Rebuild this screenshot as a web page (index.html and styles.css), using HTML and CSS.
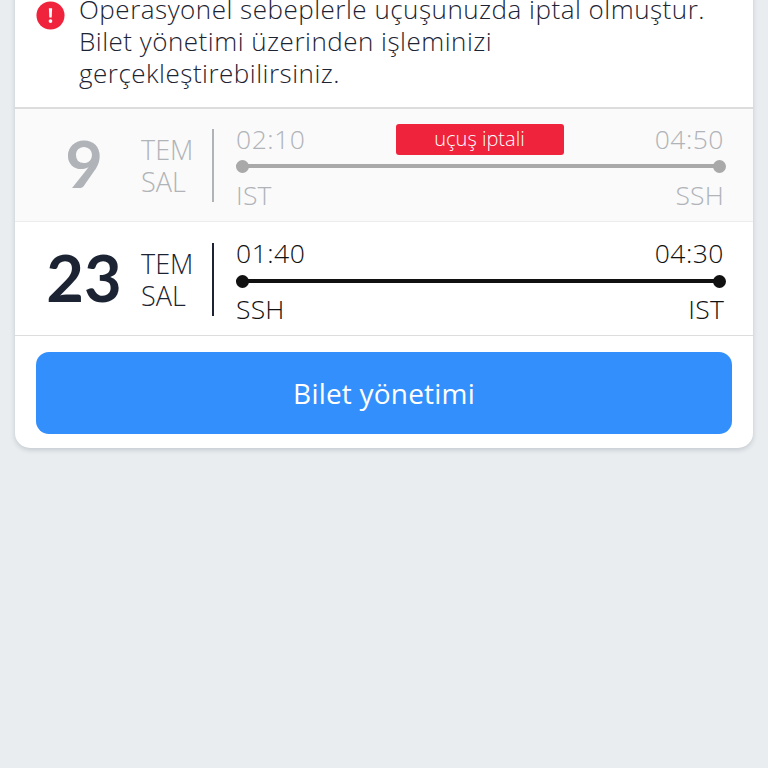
FILE: index.html
```html
<!DOCTYPE html>
<html lang="tr">
<head>
<meta charset="utf-8">
<title>Bilet yönetimi</title>
<link rel="stylesheet" href="styles.css">
</head>
<body>
<main class="card">
  <section class="notice">
    <svg class="notice-icon" viewBox="0 0 30 30" aria-hidden="true">
      <circle cx="15" cy="15" r="14.5" fill="#ef233c"/>
      <path d="M13.3 7.6h3.4l-.5 9.4h-2.4z" fill="#fff"/>
      <circle cx="15" cy="20.8" r="1.9" fill="#fff"/>
    </svg>
    <p class="notice-text">Operasyonel sebeplerle uçuşunuzda iptal olmuştur. Bilet yönetimi üzerinden işleminizi gerçekleştirebilirsiniz.</p>
  </section>
  <section class="flight flight-cancelled">
    <div class="date">
      <span class="day">9</span>
      <span class="month"><span>TEM</span><span>SAL</span></span>
    </div>
    <div class="route">
      <div class="route-row">
        <span>02:10</span>
        <span class="badge">uçuş iptali</span>
        <span>04:50</span>
      </div>
      <div class="line"></div>
      <div class="route-row route-codes"><span>IST</span><span>SSH</span></div>
    </div>
  </section>
  <section class="flight flight-active">
    <div class="date">
      <span class="day">23</span>
      <span class="month"><span>TEM</span><span>SAL</span></span>
    </div>
    <div class="route">
      <div class="route-row"><span>01:40</span><span>04:30</span></div>
      <div class="line"></div>
      <div class="route-row route-codes"><span>SSH</span><span>IST</span></div>
    </div>
  </section>
  <div class="actions"><button class="primary" type="button">Bilet yönetimi</button></div>
</main>
</body>
</html>
```
FILE: styles.css
```css
html, body {
  margin: 0;
  height: 100%;
  overflow: hidden;
}
body {
  background: #e9edf0;
  font-family: "Open Sans", "Lato", sans-serif;
  color: #1c2433;
}
.card {
  margin: -20px 15px 0;
  background: #fff;
  border-radius: 0 0 15px 15px;
  box-shadow: 0 2px 5px rgba(30, 40, 60, 0.18);
}
.notice {
  display: flex;
  gap: 14px;
  padding: 13px 21px 0;
  height: 129px;
  box-sizing: border-box;
  border-bottom: 2px solid #dcdcdc;
}
.notice-icon {
  width: 29px;
  height: 29px;
  margin-top: 8px;
  flex: none;
}
.notice-text {
  margin: 0;
  width: 640px;
  font-size: 26px;
  letter-spacing: 0.5px;
  line-height: 32px;
  font-weight: 300;
  color: #1c2433;
}
.flight {
  display: flex;
  height: 113px;
  box-sizing: border-box;
  padding: 20px 29px 0 0;
  border-bottom: 1.5px solid #dddddd;
}
.flight-active {
  height: 114px;
  padding-top: 21px;
}
.flight-cancelled {
  background: #fafafa;
  color: #b0b3b8;
  border-bottom-color: #ececec;
}
.date {
  display: flex;
  align-items: center;
  width: 199px;
  height: 73px;
  border-right: 2px solid currentColor;
  flex: none;
  box-sizing: border-box;
}
.day {
  width: 112px;
  margin: 0 1px 4px 13px;
  text-align: center;
  font-family: "Lato", sans-serif;
  font-size: 65px;
  line-height: 1;
  font-weight: 700;
  color: #1c2433;
}
.flight-cancelled .day {
  color: #b0b3b8;
}
.month {
  display: flex;
  flex-direction: column;
  font-size: 27px;
  line-height: 32px;
  font-weight: 300;
}
.route {
  flex: 1;
  margin-left: 22px;
  margin-top: -6px;
  font-size: 26.5px;
  letter-spacing: 0.5px;
  font-weight: 300;
  color: #111;
}
.flight-active .route {
  margin-top: -6px;
}
.flight-active .line {
  margin-top: 10px;
}
.flight-active .route-codes {
  margin-top: 10px;
}
.flight-cancelled .route {
  color: #b0b3b8;
}
.route-row {
  display: flex;
  justify-content: space-between;
  align-items: center;
  height: 32px;
  line-height: 32px;
}
.route-codes {
  margin-top: 11px;
  letter-spacing: 0.2px;
}
.line {
  position: relative;
  height: 4px;
  margin-top: 9px;
  background: currentColor;
  border-radius: 2px;
}
.flight-cancelled .line {
  color: #a9a9a9;
}
.line::before, .line::after {
  content: "";
  position: absolute;
  top: -4.5px;
  width: 13px;
  height: 13px;
  border-radius: 50%;
  background: currentColor;
}
.line::before { left: 0; }
.line::after { right: -2px; }
.badge {
  width: 168px;
  height: 31px;
  margin: 1px 0 0 -1px;
  background: #ef233c;
  border-radius: 3px;
  color: #fff;
  font-size: 20px;
  letter-spacing: 0;
  line-height: 30px;
  text-align: center;
  font-weight: 300;
}
.actions {
  padding: 16px 21px 14px;
}
.primary {
  display: block;
  width: 100%;
  height: 82px;
  border: 0;
  border-radius: 13px;
  background: #338ffb;
  color: #fff;
  font-family: inherit;
  font-size: 28px;
  letter-spacing: 0.2px;
  font-weight: 400;
}
```
